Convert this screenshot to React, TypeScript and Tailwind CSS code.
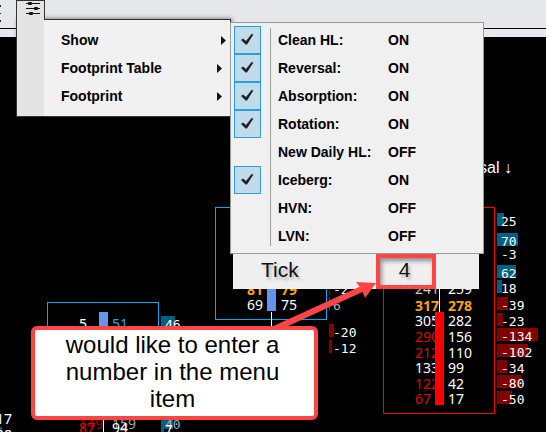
import React, { useState } from "react";

type Level = {
  y: number;
  bid?: string;
  ask?: string;
  bidColor?: string;
  askColor?: string;
  bold?: boolean;
};

type Delta = { y: number; value: string; width: number; color?: string };

const TEAL = "#00607f";
const MAROON = "#820000";
const ORANGE = "#ffa500";

const menuItems = [
  { name: "Show", open: true },
  { name: "Footprint Table", open: false },
  { name: "Footprint", open: false },
];

const initialOptions = [
  { name: "Clean HL", on: true },
  { name: "Reversal", on: true },
  { name: "Absorption", on: true },
  { name: "Rotation", on: true },
  { name: "New Daily HL", on: false },
  { name: "Iceberg", on: true },
  { name: "HVN", on: false },
  { name: "LVN", on: false },
];

const leftLevels: Level[] = [
  { y: 329, bid: "5", ask: "51", askColor: "#1fa3dc" },
  { y: 429, bid: "149", ask: "159", bidColor: "#a00000", askColor: "#a0a0a0" },
  { y: 433, bid: "87", ask: "94", bidColor: "#e00000" },
];

const middleLevels: Level[] = [
  { y: 295, bid: "81", ask: "79", bidColor: ORANGE, askColor: ORANGE, bold: true },
  { y: 310, bid: "69", ask: "75" },
];

const rightLevels: Level[] = [
  { y: 294, bid: "241", ask: "259", bidColor: "#c8c8c8" },
  { y: 311, bid: "317", ask: "278", bidColor: ORANGE, askColor: ORANGE, bold: true },
  { y: 326, bid: "305", ask: "282" },
  { y: 342, bid: "290", ask: "156", bidColor: "#e00000" },
  { y: 358, bid: "212", ask: "110", bidColor: "#e00000" },
  { y: 373, bid: "133", ask: "99" },
  { y: 389, bid: "122", ask: "42", bidColor: "#e00000" },
  { y: 404, bid: "67", ask: "17", bidColor: "#e00000" },
];

const leftDeltas: Delta[] = [
  { y: 329, value: "46", width: 14 },
  { y: 429, value: "40", width: 12, color: "#a8b4bc" },
  { y: 434, value: "7", width: 3 },
];

const middleDeltas: Delta[] = [
  { y: 294, value: "-2", width: 1 },
  { y: 310, value: "6", width: 1, color: "#b0b0b0" },
  { y: 337, value: "-20", width: 5 },
  { y: 353, value: "-12", width: 3 },
];

const rightDeltas: Delta[] = [
  { y: 226, value: "25", width: 7 },
  { y: 246, value: "70", width: 21 },
  { y: 259, value: "-3", width: 0 },
  { y: 278, value: "62", width: 19 },
  { y: 293, value: "18", width: 5 },
  { y: 310, value: "-39", width: 11 },
  { y: 326, value: "-23", width: 6 },
  { y: 341, value: "-134", width: 41 },
  { y: 357, value: "-102", width: 31 },
  { y: 373, value: "-34", width: 10 },
  { y: 388, value: "-80", width: 24 },
  { y: 404, value: "-50", width: 15 },
];

const Levels = ({ rows, bidX, askX }: { rows: Level[]; bidX: number; askX: number }) => (
  <>
    {rows.map((row) => (
      <g key={row.y} fontWeight={row.bold ? 700 : 400}>
        <text x={bidX} y={row.y} fill={row.bidColor ?? "#fff"}>
          {row.bid}
        </text>
        <text x={askX} y={row.y} fill={row.askColor ?? "#fff"}>
          {row.ask}
        </text>
      </g>
    ))}
  </>
);

const Deltas = ({ rows, x }: { rows: Delta[]; x: number }) => (
  <>
    {rows.map((row) => (
      <g key={row.y}>
        <rect
          x={x}
          y={row.y - 13}
          width={row.width}
          height={13}
          fill={row.value.startsWith("-") ? MAROON : TEAL}
        />
        <text
          x={x + 4}
          y={row.y}
          fill={row.color ?? "#fff"}
          className="font-['DejaVu_Sans_Mono',monospace] text-[13px]"
        >
          {row.value}
        </text>
      </g>
    ))}
  </>
);

const FootprintChart = () => (
  <svg className="block h-[395px] w-full font-['Noto_Sans',sans-serif] text-[14px]">
    {/* chart coordinates start at the top of the window, header is 37px */}
    <g transform="translate(0 -37)">
      {/* Left edge of the previous bar */}
      <rect x={0} y={427} width={2} height={5} fill={TEAL} />
      <text x={12} y={424} fill="#fff" textAnchor="end">
        17
      </text>
      <text x={12} y={440} fill="#fff" textAnchor="end">
        28
      </text>

      {/* Left bar */}
      <rect x={47.5} y={302.5} width={111} height={100} fill="none" stroke="#00a8f0" />
      <Levels rows={leftLevels} bidX={79} askX={112} />
      <Deltas rows={leftDeltas} x={161} />
      <rect x={99} y={312} width={9} height={40} fill="#6495ed" />
      <rect x={103} y={352} width={1} height={80} fill="#fff" />

      {/* Middle bar */}
      <rect x={215.5} y={207.5} width={111} height={112} fill="none" stroke="#00a8f0" />
      <Levels rows={middleLevels} bidX={247} askX={281} />
      <Deltas rows={middleDeltas} x={329} />
      <rect x={267} y={240} width={9} height={71} fill="#6495ed" />
      <rect x={271} y={312} width={1} height={20} fill="#fff" />

      {/* Right bar */}
      <rect x={383.5} y={207.5} width={111} height={206} fill="none" stroke="#f00" />
      <Levels rows={rightLevels} bidX={415} askX={448} />
      <Deltas rows={rightDeltas} x={497} />
      <rect x={439} y={280} width={1} height={32} fill="#fff" />
      <rect x={435} y={312} width={9} height={93} fill="#f00" />
      <text
        x={512}
        y={173}
        fill="#fff"
        textAnchor="end"
        className="font-['Liberation_Sans',sans-serif] text-[16px]"
      >
        Reversal ↓
      </text>
    </g>
  </svg>
);

const SlidersIcon = () => (
  <svg width="16" height="14" viewBox="0 0 16 14" fill="#111" aria-hidden="true">
    <path d="M1 2h14v1H1zM1 7h14v1H1zM1 12h14v1H1z" />
    <rect x="3" y="1" width="4" height="3" rx="1" />
    <rect x="9" y="6" width="4" height="3" rx="1" />
    <rect x="4" y="11" width="4" height="3" rx="1" />
  </svg>
);

const App: React.FC = () => {
  const [options, setOptions] = useState(initialOptions);
  const [tick, setTick] = useState("4");

  const toggle = (name: string) => {
    setOptions(options.map((o) => (o.name === name ? { ...o, on: !o.on } : o)));
  };

  return (
    <div className="relative min-h-screen overflow-hidden bg-black font-['Liberation_Sans',sans-serif] text-black">
      {/* Toolbar */}
      <header className="border-b-8 border-[#e9e6ed]">
        <div className="flex h-[29px] border-b border-black bg-[#e6e7e9]">
          <svg width="2" height="24" fill="#222" aria-hidden="true">
            <path d="M0 5h1v2H0zM0 13h1v1H0zM0 20h1v2H0z" />
          </svg>
        </div>
      </header>

      <main>
        <FootprintChart />
      </main>

      {/* Indicator menu */}
      <div className="absolute left-4 top-0">
        <button
          type="button"
          aria-label="Indicator settings"
          className="relative z-10 flex h-5 w-[29px] items-start justify-center border border-b-0 border-[#333] bg-[#e4e4e4] pl-[5px]"
        >
          <SlidersIcon />
        </button>
        <div className="relative -mt-px flex w-[215px] border border-[#333] bg-[#f1f1f1] shadow-[1px_-1px_4px_rgba(0,0,0,0.4)]">
          <div className="w-[27px] bg-[#e4e4e4]"></div>
          <ul className="flex-1 pb-[6px] pt-[6px]">
            {menuItems.map((item) => (
              <li key={item.name}>
                <button
                  type="button"
                  aria-haspopup="menu"
                  aria-expanded={item.open}
                  className={`flex h-[28px] w-full items-center justify-between pl-[17px] text-left text-[14px] font-bold ${
                    item.open ? "pr-1" : "pr-2"
                  }`}
                >
                  {item.name}
                  <svg width="5" height="9" fill="#111" aria-hidden="true">
                    <path d="M0 0l5 4.5L0 9z" />
                  </svg>
                </button>
              </li>
            ))}
          </ul>
        </div>
      </div>

      {/* Show submenu */}
      <div className="absolute left-[230px] top-[22px] w-[254px]">
        <div className="relative border border-[#999] bg-[#f0f0f0] py-[3px] pl-[3px]">
          {options.map((option) => (
            <label key={option.name} className="flex h-[28px] items-center text-[14px] font-bold">
              <span className="relative h-[28px] w-[27px]">
                <input
                  type="checkbox"
                  checked={option.on}
                  onChange={() => toggle(option.name)}
                  className="block h-full w-full appearance-none border border-transparent checked:border-[#2a9fdc] checked:bg-[#c0dceb]"
                />
                {option.on && (
                  <svg
                    width="13"
                    height="13"
                    viewBox="0 0 13 13"
                    className="pointer-events-none absolute left-[7px] top-[7px]"
                    aria-hidden="true"
                  >
                    <path d="M0 7l2-1.6 3 2.6L10.600 1l1.800.6L6 11.500H4.600z" fill="#222" />
                  </svg>
                )}
              </span>
              <span className="ml-[17px] w-[110px]">{option.name}:</span>
              <span>{option.on ? "ON" : "OFF"}</span>
            </label>
          ))}
          <div className="absolute bottom-[7px] left-[39px] top-[5px] w-px bg-[#a0a0a0]"></div>
        </div>
        {/* Tick value */}
        <div className="ml-[3px] mr-[5px] flex h-[35px] items-center justify-between bg-[#efefef] pr-[43px] text-[21px] text-[#111]">
          <label
            htmlFor="tick"
            className="pb-[3px] pl-7 [text-shadow:2px_3px_3px_rgba(0,0,0,0.25)]"
          >
            Tick
          </label>
          <input
            id="tick"
            type="text"
            value={tick}
            onChange={(e) => setTick(e.target.value)}
            className="h-full w-[60px] border-4 border-[#ff4545] bg-[#efefef] pb-[3px] pr-[3px] text-center shadow-[inset_2px_3px_4px_rgba(0,0,0,0.4)] outline-none [text-shadow:2px_3px_3px_rgba(0,0,0,0.25)]"
          />
        </div>
      </div>

      {/* Callout */}
      <svg
        width="112"
        height="60"
        className="absolute left-[266px] top-[280px]"
        aria-hidden="true"
      >
        <path d="M6 50L98 8" stroke="#ff4545" strokeWidth="6" />
        <path d="M110 3L90 2l6 8 3 8z" fill="#ff4545" />
      </svg>
      <div className="absolute left-[31px] top-[326px] w-[287px] rounded-md border-4 border-[#ff4545] bg-white pb-1 pt-px text-center text-[24px] leading-[27px]">
        <p className="pl-4 pr-5">would like to enter a number in the menu item</p>
      </div>
    </div>
  );
};

export default App;
